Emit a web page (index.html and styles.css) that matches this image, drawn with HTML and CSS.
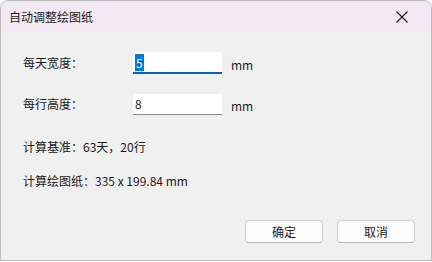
FILE: index.html
```html
<!DOCTYPE html>
<html>
<head>
    <title>自动调整绘图纸</title>
    <meta charset="utf-8">
    <link rel="stylesheet" href="styles.css">
</head>
<body>
    <div class="window">
        <div class="titlebar">
            <span class="title">自动调整绘图纸</span>
            <svg class="close" width="12" height="12" viewBox="0 0 12 12">
                <path d="M0.5 0.5 L11.5 11.5 M11.5 0.5 L0.5 11.5" stroke="#1a1a1a" stroke-width="1.1" fill="none"/>
            </svg>
        </div>
        <div class="content">
            <div class="row first">
                <span class="label">每天宽度：</span>
                <div class="field focused"><span class="sel">5</span></div>
                <span class="unit">mm</span>
            </div>
            <div class="row second">
                <span class="label">每行高度：</span>
                <div class="field"><span>8</span></div>
                <span class="unit">mm</span>
            </div>
            <div class="info first-info">计算基准：63天，20行</div>
            <div class="info second-info">计算绘图纸：335 x 199.84 mm</div>
            <div class="buttons">
                <button>确定</button>
                <button>取消</button>
            </div>
        </div>
    </div>
</body>
</html>
```

FILE: styles.css
```css
body {
    margin: 0;
    font-family: "Noto Sans CJK SC", "Noto Sans", sans-serif;
    font-size: 12px;
    color: #1a1a1a;
    background: #ffffff;
}
.window {
    width: 430px;
    height: 259px;
    border: 1px solid #bdbdbd;
    border-radius: 8px 8px 0 0;
    background: #f0f0f0;
    overflow: hidden;
    display: flex;
    flex-direction: column;
}
.titlebar {
    height: 30px;
    background: #f4e9f4;
    display: flex;
    align-items: center;
    padding: 0 23px 0 8px;
}
.title {
    flex: 1;
    line-height: 16px;
    margin-top: 1px;
}
.close {
    display: block;
    margin-top: 1px;
}
.content {
    flex: 1;
    display: flex;
    flex-direction: column;
    padding: 21px 16px 17px 22px;
}
.row {
    display: flex;
    align-items: center;
    height: 22px;
}
.row.second {
    margin-top: 19px;
}
.label {
    width: 110px;
    line-height: 16px;
}
.field {
    width: 87px;
    height: 20px;
    background: #ffffff;
    border-bottom: 1px solid #8a8a8a;
    border-radius: 2px 2px 0 0;
    padding-left: 2px;
    display: flex;
    align-items: center;
    line-height: 16px;
}
.field.focused {
    height: 20px;
    border-bottom: 2px solid #0a62b8;
}
.sel {
    background: #0078d7;
    color: #ffffff;
    padding: 0 1px;
    line-height: 17px;
}
.unit {
    margin-left: 9px;
    margin-top: 2px;
}
.info {
    line-height: 16px;
}
.first-info {
    margin-top: 24px;
}
.second-info {
    margin-top: 18px;
}
.buttons {
    margin-top: auto;
    display: flex;
    justify-content: flex-end;
    gap: 14px;
}
button {
    width: 78px;
    height: 23px;
    background: #fdfdfd;
    border: 1px solid #d0d0d0;
    border-bottom-color: #b8b8b8;
    border-radius: 4px;
    font-family: inherit;
    font-size: 12px;
    color: #1a1a1a;
    padding: 0;
}
```
